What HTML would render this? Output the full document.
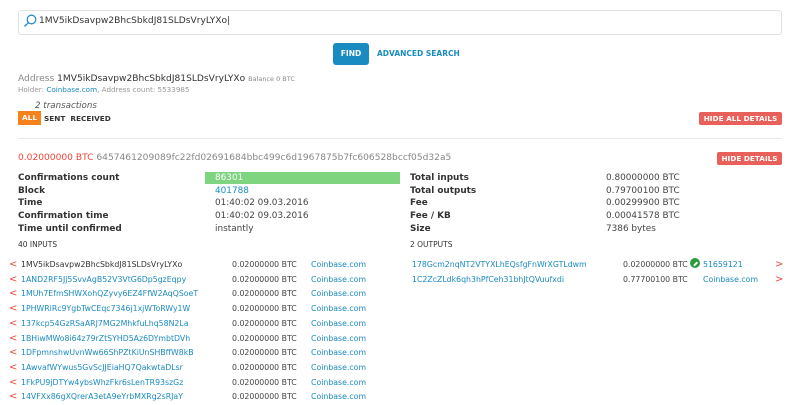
<!DOCTYPE html>
<html><head><meta charset="utf-8"><style>
*{margin:0;padding:0;box-sizing:border-box}
body{width:800px;height:403px;overflow:hidden;background:#fff;font-family:"DejaVu Sans","Liberation Sans",sans-serif;color:#333;position:relative}
.a{position:absolute;white-space:nowrap}
.blue{color:#1a8bc0}
.red{color:#f0453a}
.gray{color:#888}
.lbl{font-weight:bold;font-size:8.9px;color:#333}
.val{font-size:8.9px;color:#444}
.in{font-size:7.8px}
</style></head><body>
<div class="a" style="left:18px;top:10px;width:764px;height:25px;border:1px solid #e2e2e2;border-radius:3px"></div>
<svg class="a" style="left:22px;top:13px" width="16" height="16" viewBox="0 0 16 16"><circle cx="9.5" cy="6.5" r="4.3" fill="none" stroke="#2a8fc8" stroke-width="1.3"/><line x1="6.3" y1="9.7" x2="2.5" y2="13.5" stroke="#2a8fc8" stroke-width="1.4"/></svg>
<div class="a" style="left:39px;top:16px;font-size:9.1px;color:#333">1MV5ikDsavpw2BhcSbkdJ81SLDsVryLYXo|</div>
<div class="a" style="left:333px;top:43px;width:36px;height:22px;background:#1a8bc0;border-radius:3px;color:#fff;font-weight:bold;font-size:7.5px;text-align:center;line-height:22px">FIND</div>
<div class="a blue" style="left:377px;top:49px;font-weight:bold;font-size:7.5px">ADVANCED SEARCH</div>
<div class="a" style="left:18px;top:74px;font-size:9.1px;color:#888">Address <span style="color:#333">1MV5ikDsavpw2BhcSbkdJ81SLDsVryLYXo</span> <span style="font-size:6.5px">Balance 0 BTC</span></div>
<div class="a" style="left:18px;top:85px;font-size:7.2px;color:#999">Holder: <span class="blue">Coinbase.com</span>, Address count: 5533985</div>
<div class="a" style="left:35px;top:101px;font-size:8.7px;font-style:italic;color:#555">2 transactions</div>
<div class="a" style="left:18px;top:111px;width:23px;height:14px;background:#f7821b;color:#fff;font-weight:bold;font-size:7.3px;line-height:14px;text-align:center">ALL</div>
<div class="a" style="left:44px;top:114px;font-weight:bold;font-size:7.3px;color:#333">SENT &nbsp;RECEIVED</div>
<div class="a" style="left:699px;top:112px;width:83px;height:13px;background:#e9605a;border-radius:2px;color:#fff;font-weight:bold;font-size:7.3px;line-height:13px;text-align:center">HIDE ALL DETAILS</div>
<div class="a" style="left:18px;top:138px;width:764px;height:1px;background:#e6e6e6"></div>
<div class="a" style="left:18px;top:153px;font-size:9.1px"><span class="red">0.02000000 BTC</span> <span class="gray">6457461209089fc22fd02691684bbc499c6d1967875b7fc606528bccf05d32a5</span></div>
<div class="a" style="left:717px;top:152px;width:65px;height:13px;background:#e9605a;border-radius:2px;color:#fff;font-weight:bold;font-size:7.3px;line-height:13px;text-align:center">HIDE DETAILS</div>
<div class="a" style="left:205px;top:172px;width:195px;height:12px;background:#7fd47f"></div>
<div class="a lbl" style="left:18px;top:172px;line-height:12.7px">Confirmations count<br>Block<br>Time<br>Confirmation time<br>Time until confirmed</div>
<div class="a val" style="left:215px;top:172px;line-height:12.7px"><span style="color:#fff">86301</span><br><span class="blue">401788</span><br>01:40:02 09.03.2016<br>01:40:02 09.03.2016<br>instantly</div>
<div class="a lbl" style="left:410px;top:172px;line-height:12.7px">Total inputs<br>Total outputs<br>Fee<br>Fee / KB<br>Size</div>
<div class="a val" style="left:606px;top:172px;line-height:12.7px">0.80000000 BTC<br>0.79700100 BTC<br>0.00299900 BTC<br>0.00041578 BTC<br>7386 bytes</div>
<div class="a" style="left:18px;top:240px;font-size:7.5px;color:#333">40 INPUTS</div>
<div class="a" style="left:410px;top:240px;font-size:7.5px;color:#333">2 OUTPUTS</div>
<div class="a in red" style="left:9px;top:258px;line-height:14.7px;font-size:10px">&lt;<br>&lt;<br>&lt;<br>&lt;<br>&lt;<br>&lt;<br>&lt;<br>&lt;<br>&lt;<br>&lt;</div>
<div class="a in" style="left:21px;top:258px;line-height:14.7px">
1MV5ikDsavpw2BhcSbkdJ81SLDsVryLYXo<br>
<span class="blue">1AND2RF5Jj5SvvAgB52V3VtG6Dp5gzEqpy</span><br>
<span class="blue">1MUh7EfmSHWXohQZyvy6EZ4FfW2AqQSoeT</span><br>
<span class="blue">1PHWRiRc9YgbTwCEqc7346j1xjWToRWy1W</span><br>
<span class="blue">137kcp54GzRSaARJ7MG2MhkfuLhq58N2La</span><br>
<span class="blue">1BHiwMWo8i64z79rZtSYHD5Az6DYmbtDVh</span><br>
<span class="blue">1DFpmnshwUvnWw66ShPZtKiUnSHBffW8kB</span><br>
<span class="blue">1AwvafWYwus5GvScJJEiaHQ7QakwtaDLsr</span><br>
<span class="blue">1FkPU9jDTYw4ybsWhzFkr6sLenTR93szGz</span><br>
<span class="blue">14VFXx86gXQrerA3etA9eYrbMXRg2sRJaY</span></div>
<div class="a in" style="left:232px;top:258px;line-height:14.7px;color:#444">0.02000000 BTC<br>0.02000000 BTC<br>0.02000000 BTC<br>0.02000000 BTC<br>0.02000000 BTC<br>0.02000000 BTC<br>0.02000000 BTC<br>0.02000000 BTC<br>0.02000000 BTC<br>0.02000000 BTC</div>
<div class="a in blue" style="left:311px;top:258px;line-height:14.7px">Coinbase.com<br>Coinbase.com<br>Coinbase.com<br>Coinbase.com<br>Coinbase.com<br>Coinbase.com<br>Coinbase.com<br>Coinbase.com<br>Coinbase.com<br>Coinbase.com</div>
<div class="a in blue" style="left:412px;top:258px;line-height:14.7px">178Gcm2nqNT2VTYXLhEQsfgFnWrXGTLdwm<br>1C2ZcZLdk6qh3hPfCeh31bhJtQVuufxdi</div>
<div class="a in" style="left:623px;top:258px;line-height:14.7px;color:#444">0.02000000 BTC<br>0.77700100 BTC</div>
<div class="a" style="left:690px;top:258px;width:10px;height:10px;border-radius:50%;background:#2b9a3c"></div>
<div class="a" style="left:692.5px;top:262.5px;width:5px;height:1.5px;background:#fff;transform:rotate(-45deg)"></div>
<div class="a in blue" style="left:703px;top:258px;line-height:14.7px">51659121<br>Coinbase.com</div>
<div class="a red" style="left:775px;top:258px;line-height:14.7px;font-size:10px">&gt;<br>&gt;</div>
</body></html>
